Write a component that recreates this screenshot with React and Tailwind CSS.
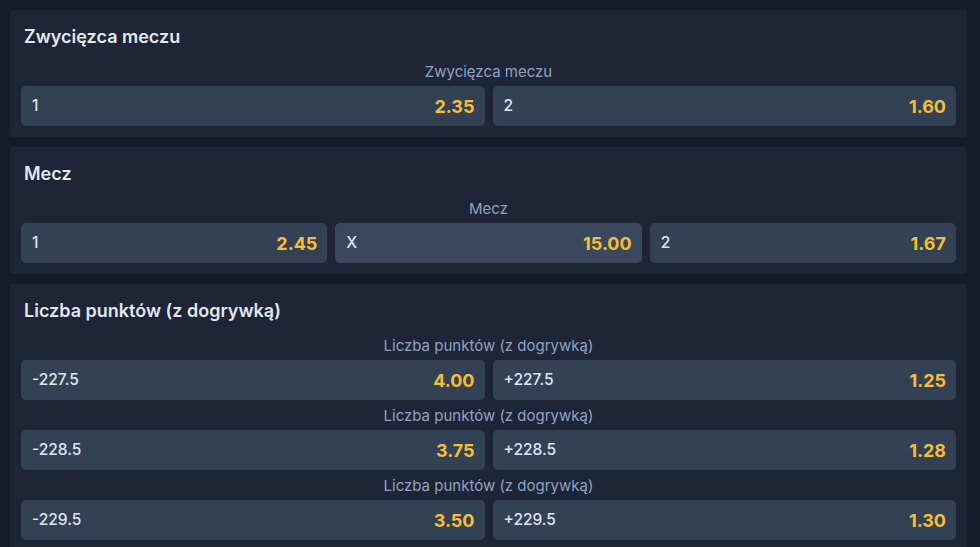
const markets = [
  {
    title: "Zwycięzca meczu",
    groups: [
      {
        name: "Zwycięzca meczu",
        outcomes: [
          { label: "1", odds: "2.35" },
          { label: "2", odds: "1.60" },
        ],
      },
    ],
  },
  {
    title: "Mecz",
    groups: [
      {
        name: "Mecz",
        outcomes: [
          { label: "1", odds: "2.45" },
          { label: "X", odds: "15.00", active: true },
          { label: "2", odds: "1.67" },
        ],
      },
    ],
  },
  {
    title: "Liczba punktów (z dogrywką)",
    groups: [
      {
        name: "Liczba punktów (z dogrywką)",
        outcomes: [
          { label: "-227.5", odds: "4.00" },
          { label: "+227.5", odds: "1.25" },
        ],
      },
      {
        name: "Liczba punktów (z dogrywką)",
        outcomes: [
          { label: "-228.5", odds: "3.75" },
          { label: "+228.5", odds: "1.28" },
        ],
      },
      {
        name: "Liczba punktów (z dogrywką)",
        outcomes: [
          { label: "-229.5", odds: "3.50" },
          { label: "+229.5", odds: "1.30" },
        ],
      },
    ],
  },
];

const OddsButton = ({ label, odds, active }) => (
  <button
    className={
      "flex h-10 min-w-0 flex-1 items-center justify-between rounded-[5px] pl-[11px] pr-[10px] " +
      (active ? "bg-[#3a485e]" : "bg-[#334155]")
    }
  >
    <span className="text-[15.5px] font-medium text-[#dfe6f0]">{label}</span>
    <span className="text-[18px] font-bold text-[#f6bd35]">{odds}</span>
  </button>
);

const Market = ({ market }) => (
  <div className="rounded-[3px] bg-[#1d2536] px-[11px] pt-[15px] pb-[11px]">
    <h2 className="mb-[13px] pl-[3px] text-[18px] leading-6 font-semibold text-[#e2e8f0]">
      {market.title}
    </h2>
    <div className="flex flex-col gap-[6px]">
      {market.groups.map((group, i) => (
        <div key={i}>
          <div className="h-6 text-center text-[15px] leading-5 text-[#8ea3c4]">
            {group.name}
          </div>
          <div className="flex gap-2">
            {group.outcomes.map((o) => (
              <OddsButton key={o.label} {...o} />
            ))}
          </div>
        </div>
      ))}
    </div>
  </div>
);

export default function App() {
  return (
    <div
      className="min-h-screen bg-[#141b2b] pt-[10px] pl-[10px] pr-[13px]"
      style={{ fontFamily: "Inter, 'Noto Sans', sans-serif" }}
    >
      <div className="flex flex-col gap-[10px]">
        {markets.map((m) => (
          <Market key={m.title} market={m} />
        ))}
      </div>
    </div>
  );
}
